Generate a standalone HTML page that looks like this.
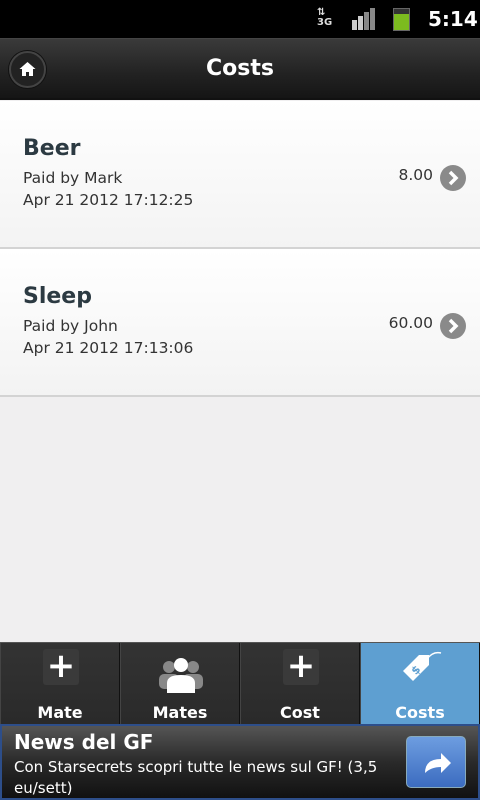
<!DOCTYPE html>
<html><head><meta charset="utf-8"><style>
*{margin:0;padding:0;box-sizing:border-box}
body{width:480px;height:800px;overflow:hidden;background:#f0eff0;font-family:"DejaVu Sans","Liberation Sans",sans-serif;position:relative}
.sb{position:absolute;top:0;left:0;width:480px;height:38px;background:#000}
.hd{position:absolute;top:38px;left:0;width:480px;height:62px;background:linear-gradient(#3a3a3a,#222 60%,#151515);border-top:1px solid #444;border-bottom:2px solid #111}
.hd h1{color:#fff;font-size:22px;font-weight:bold;text-align:center;line-height:60px}
.home{position:absolute;left:9px;top:12px;width:37px;height:37px;border-radius:50%;background:#222;border:2px solid #444;box-shadow:0 0 0 1px #111}
.row{position:absolute;left:0;width:480px;height:148px;background:linear-gradient(#fff,#f3f3f3);border-bottom:2px solid #d3d3d3}
.t{position:absolute;left:23px;top:35px;font-size:22px;font-weight:bold;color:#2c3a42}
.s{position:absolute;left:23px;top:66px;font-size:15.5px;color:#333;line-height:22px}
.a{position:absolute;right:47px;top:65px;font-size:15.5px;color:#333}
.ch{position:absolute;right:14px;top:64px;width:26px;height:26px;border-radius:50%;background:#8a8a8a}
.tabs{position:absolute;top:642px;left:0;width:480px;height:82px;background:#222;border-top:1px solid #555;display:flex}
.tab{flex:1;border-right:1px solid #111;border-left:1px solid #444;background:linear-gradient(#333,#2a2a2a);position:relative;color:#fff;font-weight:bold;font-size:16px;text-align:center}
.tab span{position:absolute;bottom:2px;left:0;right:0}
.tab.on{background:#5e9fd1}
.plus{position:absolute;left:42px;top:6px;width:36px;height:36px;background:#3a3a3a;border-radius:3px;color:#fff;font-size:34px;line-height:34px}
.ad{position:absolute;top:724px;left:0;width:480px;height:76px;background:linear-gradient(#555,#2a2a2a 50%,#111);border:2px solid #2d4e8a}
.ad b{position:absolute;left:12px;top:4px;color:#fff;font-size:20px}
.ad p{position:absolute;left:12px;top:31px;width:390px;color:#fff;font-size:15px;line-height:21px}
.go{position:absolute;right:12px;top:10px;width:60px;height:52px;border-radius:5px;background:linear-gradient(#6d9de0,#3c6cc0);border:1px solid #8ab}
</style></head><body>
<div class="sb">
<div style="position:absolute;left:317px;top:8px;color:#ddd;font-size:10px;font-weight:bold;line-height:10px">⇅<br>3G</div>
<div style="position:absolute;left:352px;top:20px;width:5px;height:10px;background:#ccc"></div>
<div style="position:absolute;left:358px;top:16px;width:5px;height:14px;background:#ccc"></div>
<div style="position:absolute;left:364px;top:12px;width:5px;height:18px;background:#888"></div>
<div style="position:absolute;left:370px;top:8px;width:5px;height:22px;background:#888"></div>
<div style="position:absolute;left:393px;top:8px;width:17px;height:23px;background:linear-gradient(#333 25%,#7cbb1f 25%);border:1px solid #666"></div>
<div style="position:absolute;left:428px;top:7px;color:#fff;font-size:20px;font-weight:bold">5:14</div>
</div>
<div class="hd"><div class="home"><svg width="33" height="33" viewBox="0 0 33 33"><path d="M16.5 9l-8 7h2.5v7h4v-4h3v4h4v-7h2.5z" fill="#fff"/></svg></div><h1>Costs</h1></div>
<div class="row" style="top:101px"><div class="t">Beer</div><div class="s">Paid by Mark<br>Apr 21 2012 17:12:25</div><div class="a">8.00</div><div class="ch"><svg width="26" height="26" viewBox="0 0 26 26"><path d="M10 7l6 6-6 6" stroke="#fff" stroke-width="3.5" fill="none"/></svg></div></div>
<div class="row" style="top:249px"><div class="t">Sleep</div><div class="s">Paid by John<br>Apr 21 2012 17:13:06</div><div class="a">60.00</div><div class="ch"><svg width="26" height="26" viewBox="0 0 26 26"><path d="M10 7l6 6-6 6" stroke="#fff" stroke-width="3.5" fill="none"/></svg></div></div>
<div class="tabs">
<div class="tab"><div class="plus">+</div><span>Mate</span></div>
<div class="tab"><svg style="position:absolute;left:36px;top:14px" width="48" height="36" viewBox="0 0 48 36"><circle cx="12" cy="10" r="6" fill="#888"/><circle cx="36" cy="10" r="6" fill="#888"/><rect x="2" y="17" width="20" height="15" rx="5" fill="#888"/><rect x="26" y="17" width="20" height="15" rx="5" fill="#888"/><circle cx="24" cy="8" r="7" fill="#fff"/><path d="M10 36v-10q0-8 14-8t14 8v10z" fill="#fff"/></svg><span>Mates</span></div>
<div class="tab"><div class="plus">+</div><span>Cost</span></div>
<div class="tab on"><svg style="position:absolute;left:38px;top:6px" width="46" height="36" viewBox="0 0 46 36"><path d="M4 22l16-16h10v10l-16 16z" fill="#fff"/><path d="M28 10q6-8 14-6" stroke="#fff" fill="none" stroke-width="1.5"/><text x="12" y="25" font-size="11" fill="#5e9fd1" transform="rotate(-45 16 20)">$</text></svg><span>Costs</span></div>
</div>
<div class="ad"><b>News del GF</b><p>Con Starsecrets scopri tutte le news sul GF! (3,5 eu/sett)</p><div class="go"><svg width="58" height="50" viewBox="0 0 58 50"><path d="M18 36q0-14 16-14v-6l10 10-10 10v-6q-10 0-16 6z" fill="#fff"/></svg></div></div>
</body></html>
